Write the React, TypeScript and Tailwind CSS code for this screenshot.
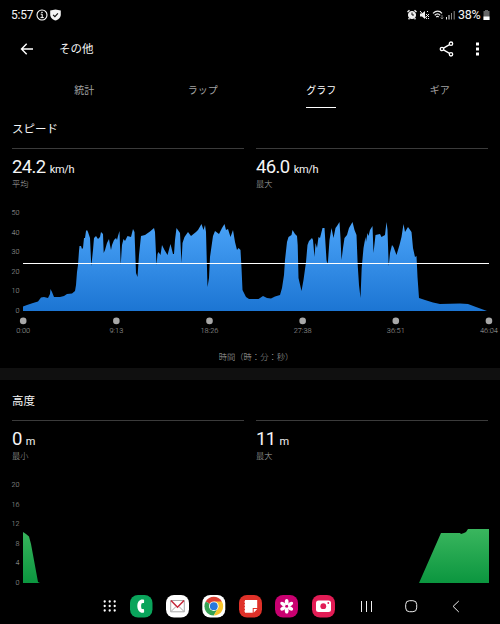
import React from 'react'

const TABS = ['統計', 'ラップ', 'グラフ', 'ギア']

const TIME_TICKS = ['0:00', '9:13', '18:26', '27:38', '36:51', '46:04']

const SPEED_POINTS =
    '23,311 23,306.5 27,305 33,303 38,301.5 41,297.5 44,297 48,298 50,294 50.5,289 52,292 54,297 60,297 64,296 67,294 72,293.5 75,291 76,285 77,272 78,265 79,251 79.5,246 81,246 82,249 83,248 84,238 85,238 86,231 87,230 88,232 89,235 90,238 91.3,266 93,250 94,238 96,236 98,239 100,237 101,232 103,234 103.7,253 105,250 107,243 109,239 110,245 111,250 112,245 114,240 116,238 117,240 118,236 119.5,231 120.7,265 122,245 123.5,239 125,241 127.5,236 131,237 133,229 134.5,232 136,273 137.5,277 139,255 141,236 145,235 150,231.5 154,228 155,232 156.5,265 157.5,254 158.5,252 160.5,255 162,245 164.5,250 167.5,255 170.5,244 173,254 174,254 175,240 176.5,228 180,233 181.5,263 182.5,243 184.5,237 188,232 191,236 196,232 198,230 201.5,224 203.5,230 205,225 206,232 207.5,287 209,278 210,257 213,236 215,231 219,234 222,228 224.5,224 226,230 228,229 230.5,237 233,230 235,242 237,250 238.5,248 240.5,250 241.5,268 242.5,290 246,297 249,299 258.5,299 263,296 267,298 271,298.5 275,296.5 280,295 282,288 284,275 285,260 287,242 288.5,237 291.5,235 292.5,230 295,234 297,236 297.7,245 298.5,278 301.5,291 303.5,280 306,262 307.5,245 309,241 312,238 313,240 314.5,257 315.5,243 317,248 318.5,237 320,238 322.5,228 324.5,228 326.5,260 327.3,264 328,261 329.5,240 331.5,228 333.5,238 335.5,228 337,226 339.5,222 340.5,238 341.5,260 343,248 344.5,238 347,235 349,228 352.5,222 354.5,230 356.5,235 357.7,265 359,285 360.5,298 361.7,268 363.5,248 365.5,237 366,242 367.5,233 368.5,236 370,230 372.5,226 373.5,253 375.5,235 380,234 381.5,237 385,235 386.5,222 387.5,230 388.7,266 390,253 392,245 393.5,247 396.5,255 399.5,245 401.5,237 403.5,224 405,232 408,227 411.5,232 413,248 415,257 416.5,256 417.5,277 419,298 425,300 433,302.5 440,304 460,303.5 468,304 476,307 487,311'

const ELEVATION_START = '23,583 23,532 26,534 29,536.5 31,544 38,582 40,583'
const ELEVATION_END = '419,583 441,533 460,533 461,534 464,533 466,532 468,529 489,529 489,583'

type StatProps = { value: string; unit: string; label: string }

function Stat({ value, unit, label }: StatProps) {
    return (
        <div className="h-[52px] flex-1 border-t border-[#3b3b3b] pt-[7px]">
            <div className="flex h-[22px] items-baseline gap-[4px] leading-[22px]">
                <span className="text-[18.5px] tracking-[-0.6px]">{value}</span>
                <span className="text-[11px] tracking-[-0.3px]">{unit}</span>
            </div>
            <div className="text-[8.2px] leading-[13px] font-light text-[#a8a8a8]">{label}</div>
        </div>
    )
}

function StatusBar() {
    return (
        <div className="flex h-[30px] items-center justify-between pr-[10px] pl-[11px] text-[12px]">
            <div className="flex items-center gap-[1px]">
                <span className="w-[24px] text-[12px] tracking-[-0.2px]">5:57</span>
                <svg width="12" height="12" viewBox="0 0 12 12" fill="none" stroke="#fff">
                    <circle cx="6" cy="6" r="5" strokeWidth="1.1" />
                    <path d="M4.7 5.2h1.5v3.4M4.5 8.6h3.3" />
                    <circle cx="6" cy="3.3" r=".4" />
                </svg>
                <svg width="13" height="12" viewBox="0 0 12 12">
                    <path d="M6 .5 11.3 1.6v3.9C11.3 9 8.5 10.7 6 11.5 3.5 10.7.7 9 .7 5.5V1.6z" fill="#f4f4f4" />
                    <path d="m3.6 5.8 1.8 1.8 3-3.2" fill="none" stroke="#111" strokeWidth="1.2" />
                </svg>
            </div>
            <div className="flex items-center">
                <svg width="52" height="12" viewBox="0 0 52 12" fill="none" stroke="#eee" strokeWidth="1">
                    <path d="m1.5 3 2-1.7m5 0 2 1.7M2.5 10.2l1-1m6 1-1-1" strokeWidth="1.5" />
                    <circle cx="6" cy="6" r="3.6" fill="#eee" />
                    <path d="M6 3.5V6h2" stroke="#111" />
                    <path d="M14 4.5h2l3-2.5v8l-3-2.5h-2z" fill="#eee" stroke="none" />
                    <path d="m14 2 7 8M20 5l3 3m0-3-3 3M21 2l1 1m0 7 1-1" />
                    <path d="M27 4.3c3-3 6.5-3 9 0M28.7 6.3c2-1.8 3.8-1.8 5.5 0M30.2 8c1-.8 1.7-.8 2.5 0" strokeWidth="1.2" />
                    <path d="M36 6v4m-1.3-1.5L36 10l1.3-1.5" stroke="#999" strokeWidth=".8" />
                    <path d="M40.5 8v2.5M43 6v4.5" />
                    <path d="M45.5 4v6.5M48.2 2v8.5" stroke="#888" />
                </svg>
                <span className="w-[25px] text-[12.5px] tracking-[-0.3px]">38%</span>
                <svg width="7" height="10" viewBox="0 0 7 10">
                    <path d="M2 0h3v1h1.5v9H.5V1H2z" fill="#666" />
                    <path d="M.5 6.5h6V10h-6z" fill="#fff" />
                </svg>
            </div>
        </div>
    )
}

function Header() {
    return (
        <header className="flex h-[38px] items-center pr-[20px] pl-[20px]">
            <svg width="14" height="14" viewBox="0 0 14 14" fill="none" stroke="#fff" strokeWidth="1.4">
                <path d="M13 7H1.5M6.7 1.7 1.5 7l5.2 5.3" />
            </svg>
            <h1 className="ml-[25px] flex-1 pt-[2px] text-[11.5px]">その他</h1>
            <svg width="15" height="16" viewBox="0 0 15 16" fill="none" stroke="#fff" strokeWidth="1.3">
                <circle cx="3" cy="8" r="1.7" />
                <circle cx="12" cy="2.7" r="1.7" />
                <circle cx="12" cy="13.3" r="1.7" />
                <path d="m4.5 7.1 6-3.5m-6 5.3 6 3.5" />
            </svg>
            <svg className="ml-[21px]" width="5" height="16" viewBox="0 0 5 16" fill="#fff">
                <path d="M1 1.5h3v3H1zM1 6.5h3v3H1zM1 11.5h3v3H1z" />
            </svg>
        </header>
    )
}

function SpeedChart() {
    return (
        <svg width="500" height="168" viewBox="0 200 500 168" className="block">
            <defs>
                <linearGradient id="speed" x1="0" y1="222" x2="0" y2="311" gradientUnits="userSpaceOnUse">
                    <stop stopColor="#4aa3f8" />
                    <stop offset="1" stopColor="#1c75d3" />
                </linearGradient>
            </defs>
            <g fill="#a8a8a8" fontSize="7.2" fontWeight="300" textAnchor="end">
                {[50, 40, 30, 20, 10, 0].map((v, i) => (
                    <text key={v} x="19.5" y={215 + i * 19.6}>
                        {v}
                    </text>
                ))}
            </g>
            <polygon points={SPEED_POINTS} fill="url(#speed)" />
            <rect x="23" y="263" width="466" height="1" fill="#fff" />
            <g fill="#a8a8a8" fontSize="7.4" fontWeight="300" textAnchor="middle">
                {TIME_TICKS.map((t, i) => (
                    <React.Fragment key={t}>
                        <circle cx={23.2 + i * 93.15} cy="320.9" r="3.3" />
                        <text x={23.2 + i * 93.15} y="333.2">
                            {t}
                        </text>
                    </React.Fragment>
                ))}
                <text x="256" y="360" fontSize="8.3">
                    時間（時：分：秒）
                </text>
            </g>
        </svg>
    )
}

function ElevationChart() {
    return (
        <svg width="500" height="116" viewBox="0 472 500 116" className="block">
            <defs>
                <linearGradient id="elevation" x1="0" y1="529" x2="0" y2="583" gradientUnits="userSpaceOnUse">
                    <stop stopColor="#3ab65e" />
                    <stop offset="1" stopColor="#0b963f" />
                </linearGradient>
            </defs>
            <g fill="#a8a8a8" fontSize="7.2" fontWeight="300" textAnchor="end">
                {[20, 16, 12, 8, 4, 0].map((v, i) => (
                    <text key={v} x="19.5" y={487 + i * 19.6}>
                        {v}
                    </text>
                ))}
            </g>
            <g fill="url(#elevation)">
                <polygon points={ELEVATION_START} />
                <polygon points={ELEVATION_END} />
            </g>
        </svg>
    )
}

function NavBar() {
    return (
        <svg width="500" height="36" viewBox="0 588 500 36" className="block">
            <g fill="#fff">
                {[104.7, 109.7, 114.7].map((x) =>
                    [601.5, 606, 610.5].map((y) => <circle key={`${x}-${y}`} cx={x} cy={y} r="1.15" />)
                )}
            </g>
            <rect x="130" y="595" width="22.5" height="22.5" rx="8" fill="#0aa45b" />
            <path
                d="M143.3 599.5h-2c-2.6.8-4 3.2-4 6.6s1.4 5.9 4 6.7h2c.5 0 .8-.4.8-.8v-2c0-.5-.3-.8-.8-.9l-1.6-.2c-.8-1.7-.8-3.9 0-5.6l1.6-.2c.5 0 .8-.4.8-.9v-1.9c0-.4-.3-.8-.8-.8z"
                fill="#fff"
            />
            <rect x="166" y="595" width="23" height="22.5" rx="8" fill="#fff" />
            <path d="M170.7 600.5h13.6v11.3h-13.6zM171 611.5l5-5m8 5-5-5" fill="none" stroke="#aaa" />
            <path d="m171 600.5 6.5 6.7 6.5-6.7" fill="none" stroke="#c5283b" strokeWidth="1.5" />
            <rect x="202.3" y="595" width="23" height="22.5" rx="8" fill="#fff" />
            <path d="M213.8 606.2 205.7 601.5a9.4 9.4 0 0 1 16.2 0z" fill="#dc4033" />
            <path d="m213.8 606.2-8.1-4.7a9.4 9.4 0 0 0 8.1 14.1l4-7z" fill="#35a152" />
            <path d="M213.8 601.5h8.1a9.4 9.4 0 0 1-8.1 14.1l4-7z" fill="#f9c52c" />
            <circle cx="213.8" cy="606.2" r="4.8" fill="#fff" />
            <circle cx="213.8" cy="606.2" r="3.9" fill="#2878dc" />
            <rect x="239" y="595" width="23" height="22.5" rx="8" fill="#df3129" />
            <path d="M245 600h12.2v8h-4.5v4.8H245z" fill="#fff" />
            <path d="M253.7 609h3.5l-3.5 3.7z" fill="#fff" />
            <path d="M244 602h2M244 605h2M244 608h2M244 611h2" stroke="#fff" strokeWidth=".8" />
            <rect x="275" y="595" width="23" height="22.5" rx="8" fill="#c90070" />
            <g fill="#fff">
                {[0, 60, 120, 180, 240, 300].map((a) => (
                    <ellipse key={a} cx="286.7" cy="602" rx="1.9" ry="3.1" transform={`rotate(${a} 286.7 606.2)`} />
                ))}
            </g>
            <circle cx="286.7" cy="606.2" r="1.3" fill="#c90070" />
            <rect x="312" y="595" width="23" height="22.5" rx="8" fill="#e21c55" />
            <rect x="316" y="600.5" width="15" height="11.5" rx="2.5" fill="#fff" />
            <circle cx="323.3" cy="606.2" r="2.9" fill="#e21c55" />
            <circle cx="328.3" cy="603" r=".9" fill="#e21c55" />
            <g fill="none" stroke="#eee">
                <path d="M361.5 601v11M366.5 601v11M371.5 601v11" />
                <rect x="405.7" y="600.7" width="11" height="11" rx="3.8" />
                <path d="m458.8 601-5.7 5.4 5.7 5.6" />
            </g>
        </svg>
    )
}

export default function App() {
    return (
        <div className="flex h-[624px] w-[500px] flex-col overflow-hidden bg-black font-[Roboto,'Noto_Sans_CJK_JP',sans-serif] text-[#f5f5f5]">
            <StatusBar />
            <Header />
            <nav className="flex h-[40px] pr-px pl-[25px]">
                {TABS.map((tab) => (
                    <div key={tab} className="flex flex-1 justify-center">
                        <div
                            className={
                                tab === 'グラフ'
                                    ? 'h-[40px] border-b border-white text-[10px] leading-[46px] text-white'
                                    : 'h-[40px] text-[10px] leading-[46px] text-[#a3a3a3]'
                            }
                        >
                            {tab}
                        </div>
                    </div>
                ))}
            </nav>
            <section>
                <h2 className="h-[40px] pl-[12px] text-[11.5px] leading-[42px]">スピード</h2>
                <div className="flex gap-[12px] px-[12px]">
                    <Stat value="24.2" unit="km/h" label="平均" />
                    <Stat value="46.0" unit="km/h" label="最大" />
                </div>
                <SpeedChart />
            </section>
            <div className="h-[12px] shrink-0 bg-[#101010]" />
            <section>
                <h2 className="h-[40px] pl-[12px] text-[11.5px] leading-[43px]">高度</h2>
                <div className="flex gap-[12px] px-[12px]">
                    <Stat value="0" unit="m" label="最小" />
                    <Stat value="11" unit="m" label="最大" />
                </div>
                <ElevationChart />
            </section>
            <NavBar />
        </div>
    )
}
